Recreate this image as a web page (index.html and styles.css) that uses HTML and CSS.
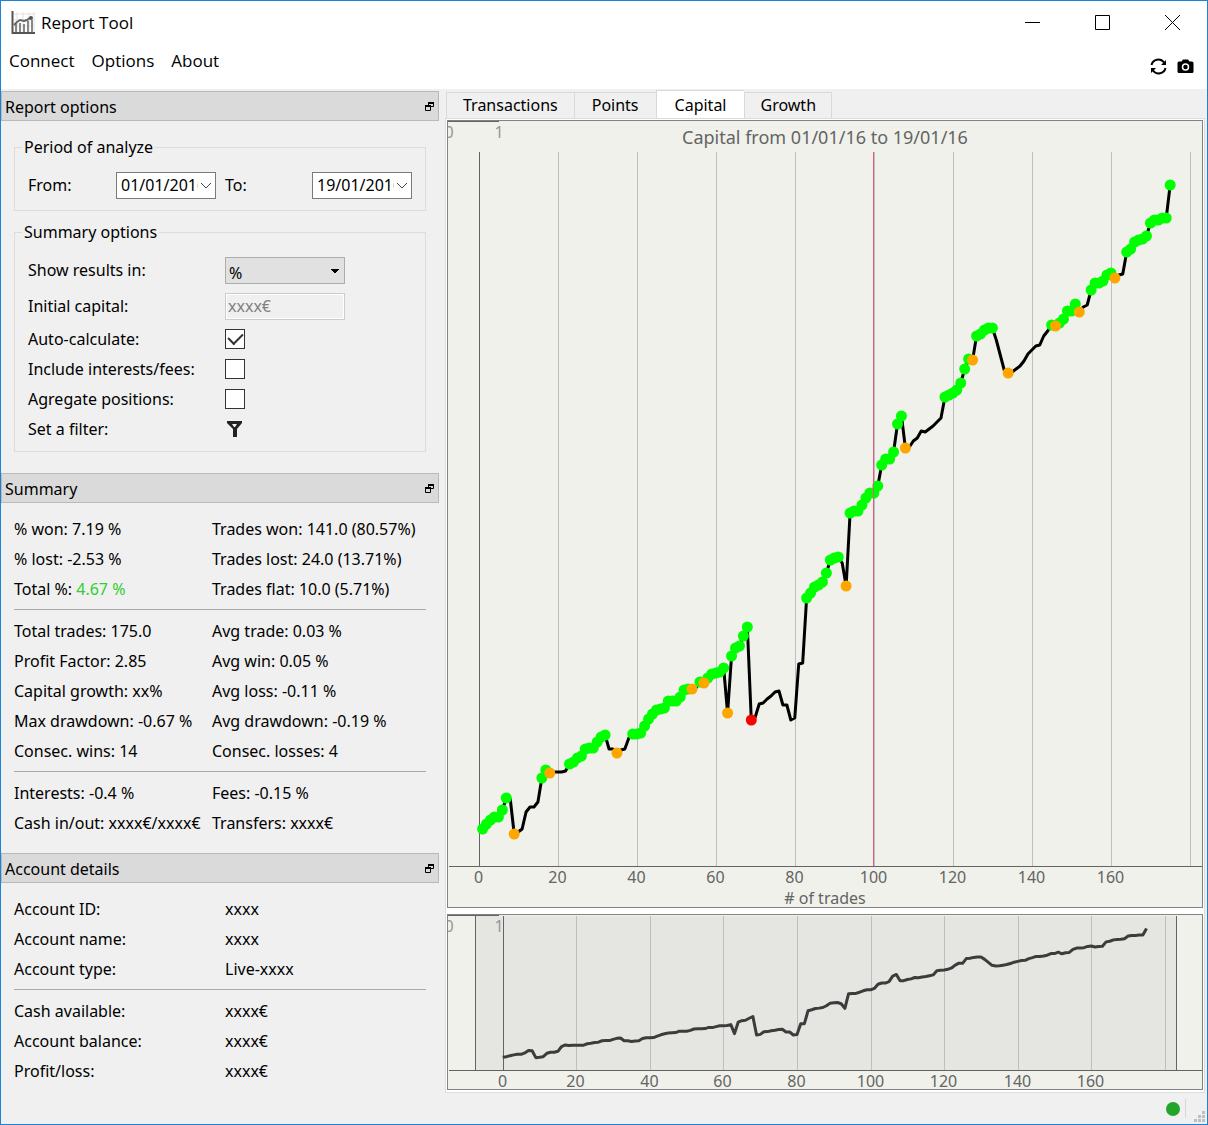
FILE: index.html
```html
<!DOCTYPE html>
<html lang="en">
<head>
    <meta charset="UTF-8">
    <meta name="viewport" content="width=device-width, initial-scale=1.0">
    <title>Report Tool</title>
    <link rel="stylesheet" href="styles.css">
</head>
<body>
    <header class="window-header">
        <div class="title-bar">
            <svg class="app-icon" width="25" height="25" viewBox="0 0 25 25">
                <path d="M6 2v20M12 2v20M18 2v20M23 2v20M3 4h21M3 10h21M3 16h21" stroke="#e2e2e2" fill="none"/>
                <path d="M4 14h2v9H4zM8 13h2v10H8zM12 14h2v9h-2zM16 11h2v12h-2zM20 10h2v13h-2z" fill="#888"/>
                <path d="M3 15l3-3 3-2 4 1 3-1 4-3" stroke="#666" stroke-width="2" fill="none"/>
                <circle cx="20" cy="8" r="2" fill="#555"/>
                <path d="M1.500 1v22H24" stroke="#555" stroke-width="2" fill="none"/>
            </svg>
            <h1>Report Tool</h1>
            <div class="window-buttons">
                <button aria-label="Minimize"><svg width="17" height="17"><path d="M1 8.500h15" stroke="#000"/></svg></button>
                <button aria-label="Maximize"><svg width="17" height="17"><path d="M1.500 1.500h14v14h-14z" stroke="#000" fill="none"/></svg></button>
                <button aria-label="Close"><svg width="17" height="17"><path d="M1 1l15 15M16 1L1 16" stroke="#000"/></svg></button>
            </div>
        </div>
        <div class="menu-bar">
            <nav class="menu">
                <a href="#">Connect</a>
                <a href="#">Options</a>
                <a href="#">About</a>
            </nav>
            <div class="toolbar">
                <button aria-label="Refresh">
                    <svg width="17" height="17" viewBox="0 0 17 17">
                        <path d="M1.500 7a7 7 0 0 1 12.500-2.500M15.500 10A7 7 0 0 1 3 12.500" stroke="#000" stroke-width="2" fill="none"/>
                        <path d="M16 2v5h-5zM1 15v-5h5z" fill="#000"/>
                    </svg>
                </button>
                <button aria-label="Screenshot">
                    <svg width="17" height="17" viewBox="0 0 17 17">
                        <path d="M2 3.500h2.500l1.500-2h5l1.500 2H15q1.500 0 1.500 1.500v8.500q0 1.500-1.500 1.500H2Q.5 15 .5 13.500V5Q.5 3.500 2 3.500z" fill="#000"/>
                        <circle cx="8.500" cy="9" r="3" fill="none" stroke="#fff" stroke-width="1.500"/>
                    </svg>
                </button>
            </div>
        </div>
    </header>

    <main class="workspace">
        <aside class="docks">
            <section class="dock">
                <div class="dock-title">
                    <h2>Report options</h2>
                    <button aria-label="Float report options"><svg width="9" height="9"><use href="#float-icon"/></svg></button>
                </div>
                <div class="dock-body options">
                    <fieldset class="period">
                        <legend>Period of analyze</legend>
                        <label for="date-from">From:</label>
                        <div class="date-box">
                            <input id="date-from" type="text" value="01/01/2016">
                            <svg width="12" height="7"><path d="M1 1l5 5 5-5" stroke="#444" fill="none"/></svg>
                        </div>
                        <label for="date-to">To:</label>
                        <div class="date-box">
                            <input id="date-to" type="text" value="19/01/2016">
                            <svg width="12" height="7"><path d="M1 1l5 5 5-5" stroke="#444" fill="none"/></svg>
                        </div>
                    </fieldset>
                    <fieldset class="summary-options">
                        <legend>Summary options</legend>
                        <label class="tall" for="results-in">Show results in:</label>
                        <select id="results-in"><option>%</option><option>Points</option></select>
                        <label class="tall" for="initial-capital">Initial capital:</label>
                        <input id="initial-capital" class="text-box" type="text" value="xxxx€" disabled>
                        <label for="auto-calculate">Auto-calculate:</label>
                        <input id="auto-calculate" type="checkbox" checked>
                        <label for="include-fees">Include interests/fees:</label>
                        <input id="include-fees" type="checkbox">
                        <label for="agregate">Agregate positions:</label>
                        <input id="agregate" type="checkbox">
                        <label for="set-filter">Set a filter:</label>
                        <button id="set-filter" class="filter-btn" aria-label="Set a filter">
                            <svg width="17" height="17"><path d="M1 0h15v2l-5 6v8H7V8L1 2zM6 3l2 3h1l2-3z" fill="#222" fill-rule="evenodd"/></svg>
                        </button>
                    </fieldset>
                </div>
            </section>

            <section class="dock">
                <div class="dock-title">
                    <h2>Summary</h2>
                    <button aria-label="Float summary"><svg width="9" height="9"><use href="#float-icon"/></svg></button>
                </div>
                <div class="dock-body">
                    <div class="stats">
                        <span>% won: 7.19 %</span><span>Trades won: 141.0 (80.57%)</span>
                        <span>% lost: -2.53 %</span><span>Trades lost: 24.0 (13.71%)</span>
                        <span>Total %: <b class="gain">4.67 %</b></span><span>Trades flat: 10.0 (5.71%)</span>
                    </div>
                    <hr>
                    <div class="stats">
                        <span>Total trades: 175.0</span><span>Avg trade: 0.03 %</span>
                        <span>Profit Factor: 2.85</span><span>Avg win: 0.05 %</span>
                        <span>Capital growth: xx%</span><span>Avg loss: -0.11 %</span>
                        <span>Max drawdown: -0.67 %</span><span>Avg drawdown: -0.19 %</span>
                        <span>Consec. wins: 14</span><span>Consec. losses: 4</span>
                    </div>
                    <hr>
                    <div class="stats">
                        <span>Interests: -0.4 %</span><span>Fees: -0.15 %</span>
                        <span>Cash in/out: xxxx€/xxxx€</span><span>Transfers: xxxx€</span>
                    </div>
                </div>
            </section>

            <section class="dock">
                <div class="dock-title">
                    <h2>Account details</h2>
                    <button aria-label="Float account details"><svg width="9" height="9"><use href="#float-icon"/></svg></button>
                </div>
                <div class="dock-body">
                    <div class="stats account">
                        <span>Account ID:</span><span>xxxx</span>
                        <span>Account name:</span><span>xxxx</span>
                        <span>Account type:</span><span>Live-xxxx</span>
                    </div>
                    <hr>
                    <div class="stats account">
                        <span>Cash available:</span><span>xxxx€</span>
                        <span>Account balance:</span><span>xxxx€</span>
                        <span>Profit/loss:</span><span>xxxx€</span>
                    </div>
                </div>
            </section>
        </aside>

        <section class="content">
            <div class="tabs" role="tablist">
                <button role="tab" class="tab">Transactions</button>
                <button role="tab" class="tab">Points</button>
                <button role="tab" class="tab active" aria-selected="true">Capital</button>
                <button role="tab" class="tab">Growth</button>
            </div>
            <div class="tab-page">
                <svg id="capital-chart" class="chart main-chart"></svg>
                <svg id="overview-chart" class="chart overview-chart"></svg>
            </div>
        </section>
    </main>

    <footer class="status-bar">
        <span class="status-dot"></span>
        <span class="divider"></span>
        <svg class="grip" width="11" height="11"><path d="M8 0h3v3H8zM8 4h3v3H8zM8 8h3v3H8zM4 4h3v3H4zM4 8h3v3H4zM0 8h3v3H0z" fill="#bfbfbf"/></svg>
    </footer>

    <svg class="symbols" width="0" height="0">
        <symbol id="float-icon" viewBox="0 0 9 9">
            <path d="M3.500 3V.5h5v4H6" stroke="#000" fill="none"/>
            <path d="M3 1h6M0 4h6" stroke="#000" stroke-width="2"/>
            <path d="M.5 3.500h5v5h-5z" stroke="#000" fill="none"/>
        </symbol>
    </svg>

    <script src="charts.js"></script>
</body>
</html>
```
FILE: styles.css
```css
* { box-sizing: border-box; }
body {
    margin: 0;
    min-height: 100vh;
    display: flex;
    flex-direction: column;
    border: 1px solid #1883d7;
    background: #f0f0f0;
    color: #000;
    font-family: "Noto Sans", sans-serif;
    font-size: 16px;
    line-height: 20px;
}
h1, h2 { margin: 0; font-weight: normal; }
button, input, select { font: inherit; color: inherit; }
button {
    padding: 0;
    border: none;
    background: none;
    cursor: pointer;
}
svg { display: block; }
.symbols { position: absolute; }

/* title and menu */
.window-header { background: #fff; height: 88px; }
.title-bar {
    display: flex;
    align-items: center;
    height: 43px;
    padding-left: 10px;
}
.title-bar h1 { margin-left: 5px; font: 17px/24px "Open Sans", sans-serif; }
.window-buttons { display: flex; margin-left: auto; }
.window-buttons button {
    width: 70px;
    height: 43px;
    display: flex;
    align-items: center;
    justify-content: center;
}
.menu-bar { display: flex; justify-content: space-between; height: 45px; }
.menu { display: flex; gap: 17px; padding: 5px 8px; }
.menu a {
    color: #000;
    text-decoration: none;
    font: 17px/24px "Open Sans", sans-serif;
}
.toolbar { display: flex; gap: 10px; padding-right: 13px; }

/* docks */
.workspace { flex: 1; display: flex; gap: 6px; }
.docks { width: 438px; flex: none; padding-top: 2px; }
.dock-title {
    display: flex;
    align-items: center;
    justify-content: space-between;
    height: 30px;
    padding: 1px 4px 0 3px;
    border: 1px solid #b9b9b9;
    background: #dadada;
}
.dock-title h2 { font-size: 16px; }
.dock-body { padding: 11px 13px 15px; }
.dock:last-child .dock-body { padding-bottom: 0; }
.dock-body hr {
    margin: 5px 0 6px;
    border: none;
    border-top: 1px solid #a9a9a9;
}
.stats {
    display: grid;
    grid-template-columns: 198px 1fr;
    line-height: 30px;
    white-space: nowrap;
}
.stats.account { grid-template-columns: 211px 1fr; }
.gain { color: #32cd32; font-weight: normal; }

.dock-body.options { padding: 16px 13px 21px; }
fieldset {
    display: grid;
    align-items: center;
    margin: 0;
    padding: 0 13px;
    border: 1px solid #dcdcdc;
}
legend { padding: 0 2px; margin-left: -6px; }
.period {
    grid-template-columns: 88px 100px 1fr 100px;
    height: 74px;
    padding-top: 3px;
}
.period label + .date-box + label { padding-left: 9px; }
.date-box {
    display: flex;
    align-items: center;
    gap: 2px;
    height: 27px;
    padding: 0 3px 0 4px;
    border: 1px solid #7a7a7a;
    background: #fff;
}
.date-box input {
    flex: 1;
    min-width: 0;
    padding: 0;
    border: none;
    outline: none;
    background: none;
}
.summary-options {
    grid-template-columns: 197px 120px;
    justify-items: start;
    line-height: 30px;
    margin-top: 11px;
    padding-top: 10px;
    padding-bottom: 7px;
}
.summary-options legend { line-height: 20px; }
.summary-options .tall { line-height: 36px; }
select {
    width: 100%;
    height: 27px;
    padding: 0 3px 3px;
    appearance: none;
    border: 1px solid #adadad;
    border-radius: 0;
    background: linear-gradient(#000, #000) 105px 11px / 8px 1px no-repeat,
        linear-gradient(#000, #000) 106px 12px / 6px 1px no-repeat,
        linear-gradient(#000, #000) 107px 13px / 4px 1px no-repeat,
        linear-gradient(#000, #000) 108px 14px / 2px 1px no-repeat #e1e1e1;
}
.text-box {
    width: 100%;
    height: 27px;
    padding: 0 2px;
    border: 1px solid #ccc;
    box-shadow: inset 0 0 0 1px #fff;
    background: #f0f0f0;
    color: #808080;
}
input[type="checkbox"] {
    width: 20px;
    height: 20px;
    margin: 0;
    appearance: none;
    border: 1px solid #333;
    background: #fff;
}
input[type="checkbox"]:checked::after {
    content: "";
    display: block;
    width: 7px;
    height: 12px;
    margin: 0 0 0 5px;
    border: solid #333;
    border-width: 0 2px 2px 0;
    transform: rotate(45deg);
}
.filter-btn { padding-left: 1px; }

/* tabs */
.content {
    flex: 1;
    min-width: 0;
    display: flex;
    flex-direction: column;
    padding: 1px 2px 0 0;
}
.tabs { display: flex; align-items: flex-end; height: 28px; padding-left: 1px; }
.tab {
    height: 26px;
    padding: 0 16px 1px;
    border: 1px solid #d9d9d9;
    border-right: none;
    border-bottom: none;
}
.tab + .tab { padding: 0 17px 1px; }
.tab:last-child { padding: 0 15px 1px; border-right: 1px solid #d9d9d9; }
.tab.active { height: 29px; padding: 0 18px; background: #fff; margin-bottom: -1px; }
.tab-page {
    flex: 1;
    display: flex;
    flex-direction: column;
    gap: 6px;
    padding: 1px 1px 2px;
    border: 1px solid #dcdcdc;
    background: #fff;
}
.chart {
    width: 100%;
    border: 1px solid #828282;
    background: #f0f1eb;
}
.main-chart { flex: 1 1 0; min-height: 400px; }
.overview-chart { height: 176px; flex: none; }
.chart text { font-size: 16px; fill: #646464; }
.chart .chart-title { font-size: 18px; }
.chart .corner { fill: #969696; }
.chart line { stroke: #bebebe; shape-rendering: crispEdges; }
.chart .axis { stroke: #646464; }
.chart .marker { stroke: #e0607a; }
.chart .window { fill: #e5e6e1; }
.curve { fill: none; stroke: #000; stroke-width: 3; stroke-linejoin: round; }
.overview-chart .curve { stroke: #3c3c3c; }
.win { fill: #00ff00; }
.flat { fill: #ffa500; }
.loss { fill: #ff0000; }

/* status bar */
.status-bar { display: flex; align-items: center; height: 31px; padding-right: 2px; }
.status-dot {
    width: 14px;
    height: 14px;
    margin-left: auto;
    border-radius: 50%;
    background: #22a52a;
}
.divider { width: 1px; height: 19px; margin: 0 8px 0 5px; background: #d7d7d7; }
.grip { align-self: flex-end; margin-bottom: 2px; }
```
FILE: charts.js
```js
// capital after each trade, starting with trade 0
const capital = [
    168, 171, 176, 180, 183, 183, 190, 202, 201, 166,
    168, 171, 188, 193, 193, 198, 222, 230, 227, 228,
    228, 228, 229, 236, 238, 242, 244, 251, 252, 252,
    258, 263, 265, 251, 251, 247, 250, 251, 262, 266,
    266, 267, 274, 281, 286, 290, 291, 292, 299, 299,
    299, 303, 310, 311, 311, 312, 318, 317, 322, 326,
    327, 328, 332, 287, 344, 352, 354, 364, 373, 280,
    283, 296, 297, 301, 304, 308, 309, 295, 295, 280,
    282, 336, 337, 402, 407, 413, 415, 418, 427, 440,
    442, 443, 437, 414, 487, 489, 489, 495, 502, 507,
    507, 514, 535, 541, 541, 548, 576, 584, 552, 553,
    559, 562, 569, 568, 571, 574, 578, 582, 603, 605,
    607, 610, 617, 631, 641, 640, 664, 666, 670, 672,
    672, 660, 645, 630, 627, 628, 631, 634, 639, 646,
    650, 654, 655, 664, 669, 675, 674, 677, 681, 689,
    689, 696, 688, 693, 695, 710, 717, 717, 719, 725,
    727, 722, 725, 726, 748, 751, 758, 760, 761, 764,
    777, 780, 780, 782, 782, 815
];
const wins = [[1, 7], [16, 17], [23, 32], [39, 53], [56, 56], [58, 62], [64, 68], [83, 91], [94, 107],
    [118, 124], [126, 130], [145, 145], [147, 151], [155, 160], [164, 175]];
const flats = [9, 18, 35, 54, 57, 63, 93, 108, 125, 134, 146, 152, 161];
const losses = [69];

function line(x1, y1, x2, y2, cls = "") {
    return `<line class="${cls}" x1="${x1}" y1="${y1}" x2="${x2}" y2="${y2}"/>`;
}

function text(x, y, str, cls = "", anchor = "middle") {
    return `<text class="${cls}" x="${x}" y="${y}" text-anchor="${anchor}">${str}</text>`;
}

function drawChart(svg, opt) {
    const w = svg.clientWidth;
    const h = svg.clientHeight;
    const bottom = h - opt.bottom;
    const x = i => 1 + (i - opt.xMin) / (opt.xMax - opt.xMin) * (w - 2);
    const y = v => bottom - (v - opt.yMin) / (opt.yMax - opt.yMin) * (bottom - opt.top);
    let out = "";

    if (opt.window) {
        const [from, to] = opt.window.map(x);
        out += `<rect class="window" x="${from}" y="${opt.top}" width="${to - from}" height="${bottom - opt.top}"/>`;
        out += line(from, opt.top, from, bottom, "axis") + line(to, opt.top, to, bottom, "axis");
    }
    for (let i = 0; i <= 180; i += 20) {
        const gx = Math.round(x(i)) + 0.5;
        out += line(gx, opt.top, gx, bottom, i === 0 ? "axis" : "");
        if (i < 180) out += text(gx - 1, bottom + 17, i);
    }
    out += line(1, bottom + 0.5, w, bottom + 0.5, "axis");

    // unused top axis, clipped in the corner
    out += line(0, 0.5, 51, 0.5, "axis") + text(1, 17, "0", "corner") + text(51, 17, "1", "corner");

    out += `<polyline class="curve" points="${capital.map((v, i) => x(i) + "," + y(v)).join(" ")}"/>`;

    if (opt.points) {
        const dot = (i, cls) => `<circle class="${cls}" cx="${x(i)}" cy="${y(capital[i])}" r="5.5"/>`;
        wins.forEach(([a, b]) => {
            for (let i = a; i <= b; i++) out += dot(i, "win");
        });
        flats.forEach(i => out += dot(i, "flat"));
        losses.forEach(i => out += dot(i, "loss"));
        const mx = Math.round(x(100)) - 0.5;
        out += line(mx, opt.top, mx, bottom, "marker");
        out += text(w / 2, 23, "Capital from 01/01/16 to 19/01/16", "chart-title");
        out += text(w / 2, h - 3, "# of trades");
    }
    svg.innerHTML = out;
}

function drawAll() {
    drawChart(document.getElementById("capital-chart"), {
        xMin: -7.5, xMax: 182.8, yMin: 134, yMax: 848, top: 31, bottom: 41, points: true
    });
    drawChart(document.getElementById("overview-chart"), {
        xMin: -14.6, xMax: 189.8, yMin: 104, yMax: 878, top: 1, bottom: 19, window: [-7.5, 183.2]
    });
}

window.addEventListener("resize", drawAll);
drawAll();
```
